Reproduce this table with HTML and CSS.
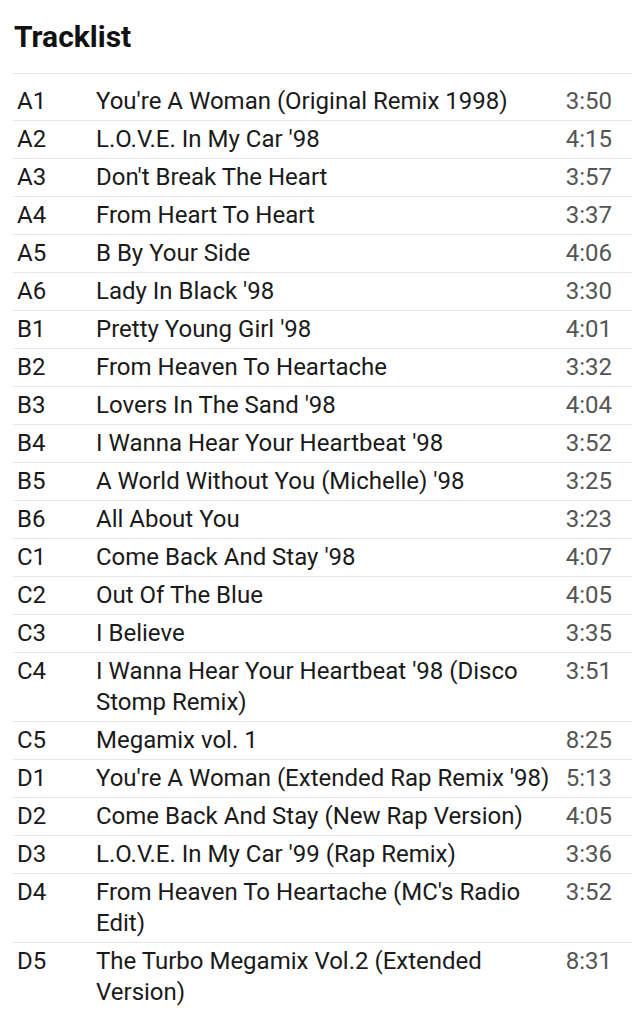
FILE: index.html
```html
<!DOCTYPE html>
<html>
<head>
<meta charset="utf-8">
<link rel="stylesheet" href="styles.css">
</head>
<body>
<section class="tracklist">
  <h2 class="heading">Tracklist</h2>
  <div class="tracks">
    <div class="track"><span class="pos">A1</span><span class="title">You're A Woman (Original Remix 1998)</span><span class="dur">3:50</span></div>
    <div class="track"><span class="pos">A2</span><span class="title">L.O.V.E. In My Car '98</span><span class="dur">4:15</span></div>
    <div class="track"><span class="pos">A3</span><span class="title">Don't Break The Heart</span><span class="dur">3:57</span></div>
    <div class="track"><span class="pos">A4</span><span class="title">From Heart To Heart</span><span class="dur">3:37</span></div>
    <div class="track"><span class="pos">A5</span><span class="title">B By Your Side</span><span class="dur">4:06</span></div>
    <div class="track"><span class="pos">A6</span><span class="title">Lady In Black '98</span><span class="dur">3:30</span></div>
    <div class="track"><span class="pos">B1</span><span class="title">Pretty Young Girl '98</span><span class="dur">4:01</span></div>
    <div class="track"><span class="pos">B2</span><span class="title">From Heaven To Heartache</span><span class="dur">3:32</span></div>
    <div class="track"><span class="pos">B3</span><span class="title">Lovers In The Sand '98</span><span class="dur">4:04</span></div>
    <div class="track"><span class="pos">B4</span><span class="title">I Wanna Hear Your Heartbeat '98</span><span class="dur">3:52</span></div>
    <div class="track"><span class="pos">B5</span><span class="title">A World Without You (Michelle) '98</span><span class="dur">3:25</span></div>
    <div class="track"><span class="pos">B6</span><span class="title">All About You</span><span class="dur">3:23</span></div>
    <div class="track"><span class="pos">C1</span><span class="title">Come Back And Stay '98</span><span class="dur">4:07</span></div>
    <div class="track"><span class="pos">C2</span><span class="title">Out Of The Blue</span><span class="dur">4:05</span></div>
    <div class="track"><span class="pos">C3</span><span class="title">I Believe</span><span class="dur">3:35</span></div>
    <div class="track"><span class="pos">C4</span><span class="title">I Wanna Hear Your Heartbeat '98 (Disco Stomp Remix)</span><span class="dur">3:51</span></div>
    <div class="track"><span class="pos">C5</span><span class="title">Megamix vol. 1</span><span class="dur">8:25</span></div>
    <div class="track"><span class="pos">D1</span><span class="title">You're A Woman (Extended Rap Remix '98)</span><span class="dur">5:13</span></div>
    <div class="track"><span class="pos">D2</span><span class="title">Come Back And Stay (New Rap Version)</span><span class="dur">4:05</span></div>
    <div class="track"><span class="pos">D3</span><span class="title">L.O.V.E. In My Car '99 (Rap Remix)</span><span class="dur">3:36</span></div>
    <div class="track"><span class="pos">D4</span><span class="title">From Heaven To Heartache (MC's Radio Edit)</span><span class="dur">3:52</span></div>
    <div class="track"><span class="pos">D5</span><span class="title">The Turbo Megamix Vol.2 (Extended Version)</span><span class="dur">8:31</span></div>
  </div>
</section>
</body>
</html>
```
FILE: styles.css
```css
html, body {
  margin: 0;
  padding: 0;
  background: #fff;
}
body {
  font-family: Roboto, "Liberation Sans", sans-serif;
  color: #1a1a1a;
}
.tracklist {
  padding: 0 12px 0 13px;
}
.heading {
  margin: 0;
  padding: 18px 0 0 1px;
  font-size: 30px;
  line-height: 38px;
  font-weight: 700;
  color: #111;
}
.tracks {
  margin-top: 17px;
  border-top: 1px solid #e6e6e6;
  padding-top: 9px;
}
.track {
  display: grid;
  grid-template-columns: 79px 1fr auto;
  padding: 3px 20px 3px 4px;
  border-bottom: 1px solid #e6e6e6;
  font-size: 24px;
  line-height: 31px;
}
.track:last-child {
  border-bottom: none;
}
.title {
  padding-right: 12px;
}
.dur {
  color: #555;
}
```
